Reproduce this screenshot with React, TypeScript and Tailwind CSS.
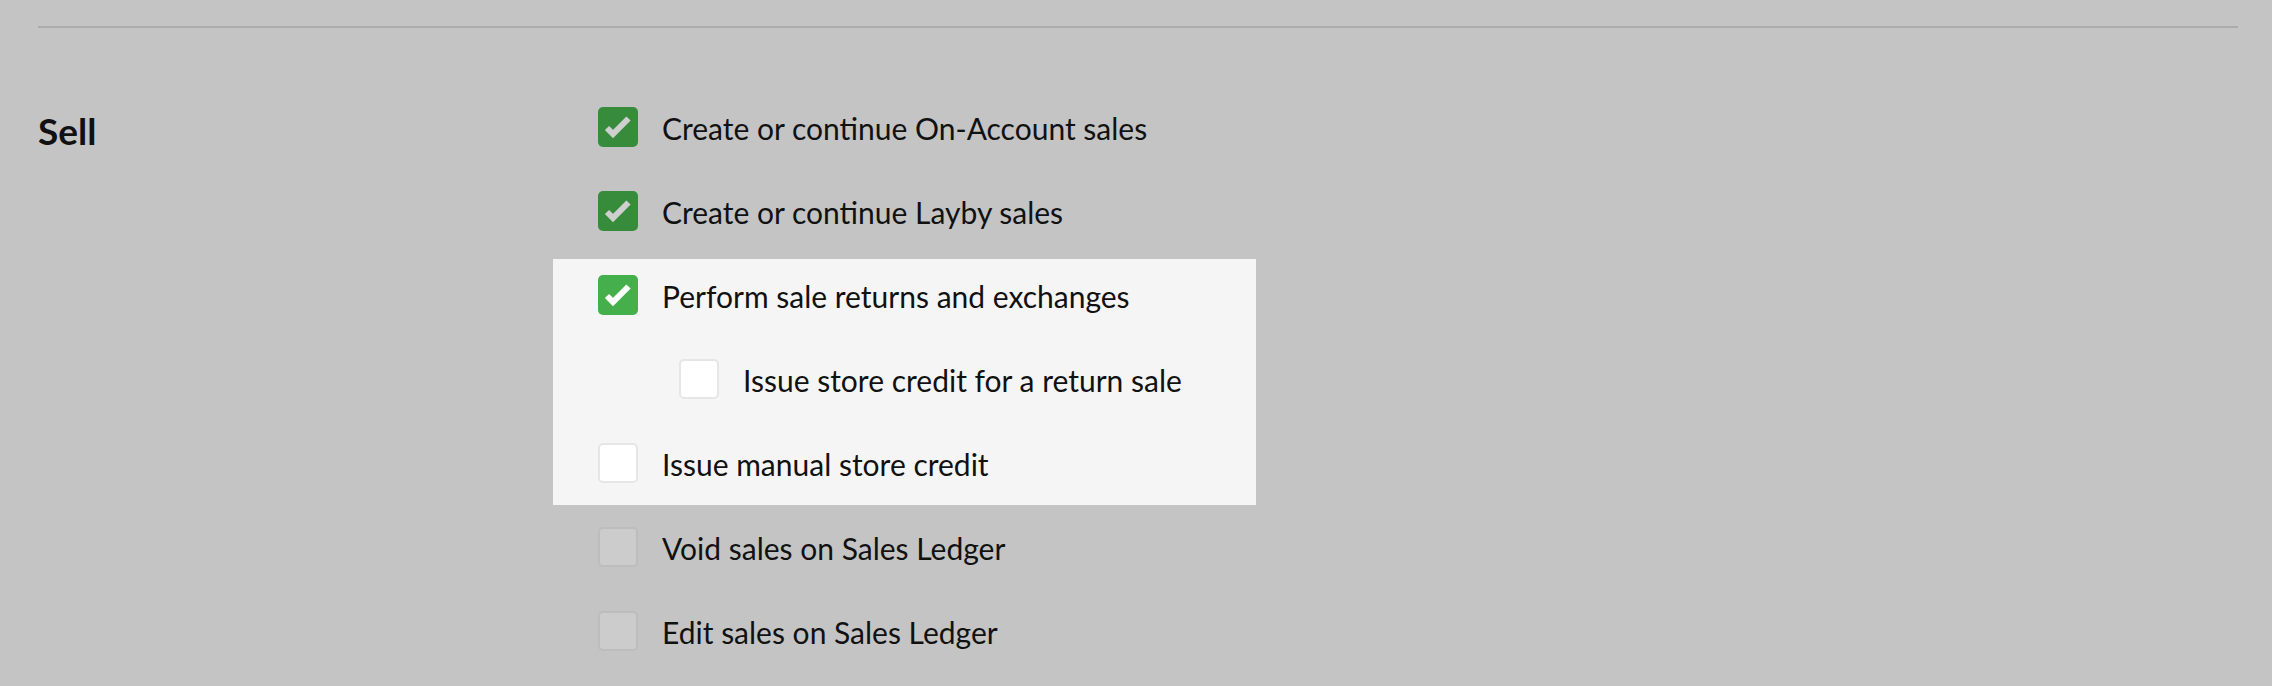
import React from "react";

type Kind = "dark" | "bright" | "white" | "gray";

function Box({ kind }: { kind: Kind }) {
  if (kind === "dark" || kind === "bright") {
    const bg = kind === "dark" ? "bg-[#378c3c]" : "bg-[#44af4b]";
    const stroke = kind === "dark" ? "#cfcfcf" : "#ffffff";
    return (
      <div className={`w-[40px] h-[40px] rounded-[5px] ${bg} flex items-center justify-center shrink-0`}>
        <svg width="40" height="40" viewBox="0 0 40 40">
          <polyline points="9,21 15,27 30.5,11.5" fill="none" stroke={stroke} strokeWidth="6" strokeLinecap="butt" strokeLinejoin="miter" />
        </svg>
      </div>
    );
  }
  if (kind === "white") {
    return <div className="w-[40px] h-[40px] rounded-[5px] bg-white border-2 border-[#e6e6e6] shrink-0" />;
  }
  return <div className="w-[40px] h-[40px] rounded-[5px] bg-[#cccccc] border-2 border-[#bdbdbd] shrink-0" />;
}

function Row({ kind, label, indent }: { kind: Kind; label: string; indent?: boolean }) {
  return (
    <div className={`flex items-center gap-[24px] h-[40px] ${indent ? "pl-[81px]" : ""}`}>
      <Box kind={kind} />
      <span className="text-[30px] leading-none text-[#111] whitespace-nowrap mt-[2px]">
        {label}
      </span>
    </div>
  );
}

export default function App() {
  return (
    <div
      className="w-[2272px] h-[686px] bg-[#c4c4c4] overflow-hidden px-[38px] pt-[26px]"
      style={{ fontFamily: "Lato, 'Open Sans', sans-serif" }}
    >
      <div className="w-[2200px] h-[2px] bg-[#acacac]" />
      <div className="flex pt-[79px]">
        <div className="w-[560px] shrink-0">
          <h2 className="text-[37px] font-bold leading-none text-[#111] mt-[5px]">Sell</h2>
        </div>
        <div className="flex flex-col">
          <div className="flex flex-col gap-[44px]">
            <Row kind="dark" label="Create or continue On-Account sales" />
            <Row kind="dark" label="Create or continue Layby sales" />
          </div>
          <div className="mt-[28px] ml-[-45px] w-[703px] bg-[#f5f5f5] pl-[45px] pt-[16px] pb-[22px] flex flex-col gap-[44px]">
            <Row kind="bright" label="Perform sale returns and exchanges" />
            <Row kind="white" label="Issue store credit for a return sale" indent />
            <Row kind="white" label="Issue manual store credit" />
          </div>
          <div className="mt-[22px] flex flex-col gap-[44px]">
            <Row kind="gray" label="Void sales on Sales Ledger" />
            <Row kind="gray" label="Edit sales on Sales Ledger" />
          </div>
        </div>
      </div>
    </div>
  );
}
